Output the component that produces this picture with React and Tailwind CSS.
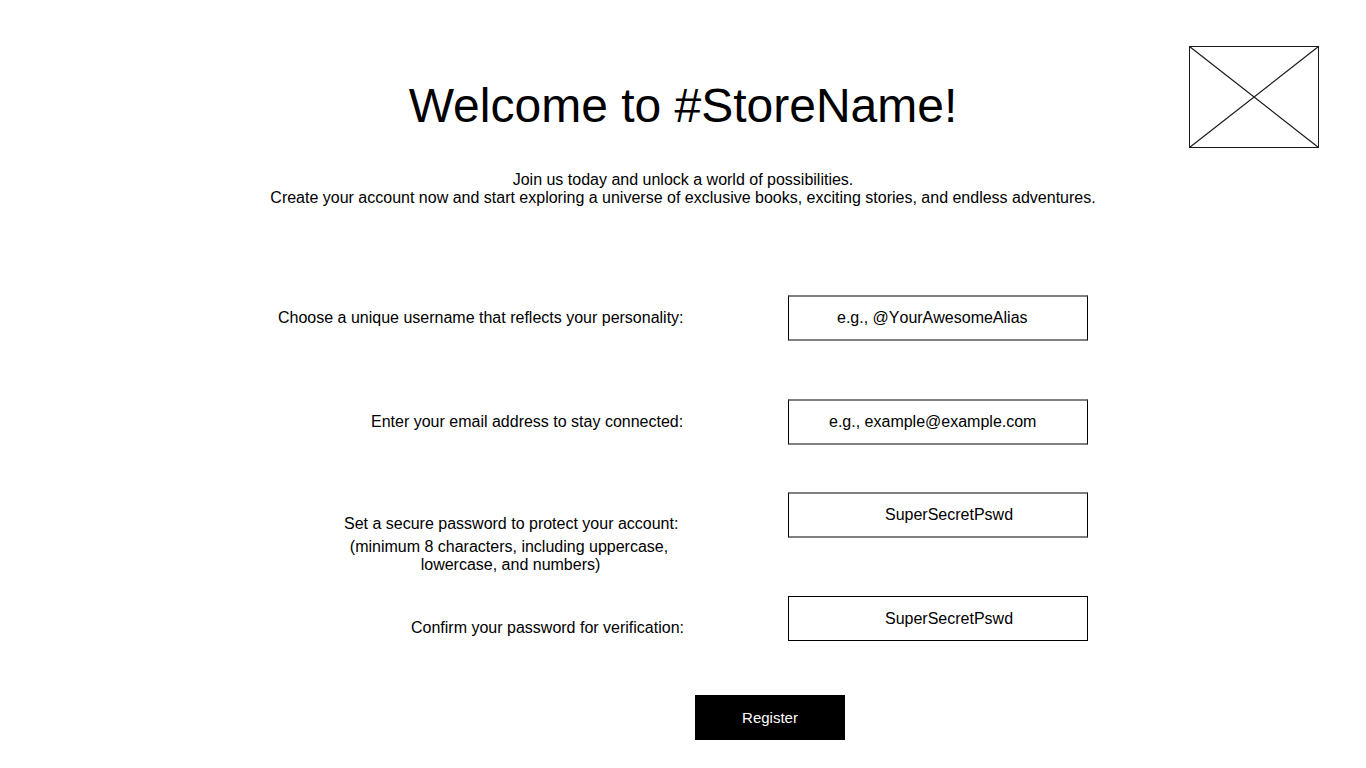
const rows = [
  { label: "Choose a unique username that reflects your personality:", labelBox: "ml-[278px]", value: "e.g., @YourAwesomeAlias", field: "pl-[48px] border-x border-y-2 border-x-black border-y-[#808080] [font-kerning:none]", row: "mt-[87px] h-[46px]", labelPad: "pt-[14px]" },
  { label: "Enter your email address to stay connected:", labelBox: "ml-[371px]", value: "e.g., example@example.com", field: "pl-[40px] border-x border-y-2 border-x-black border-y-[#808080]", row: "mt-[58px] h-[46px]", labelPad: "pt-[14px]" },
  { label: "Set a secure password to protect your account:", labelBox: "ml-[344px]", value: "SuperSecretPswd", field: "pl-[96px] border-x border-y-2 border-x-black border-y-[#808080]", row: "mt-[47px] h-[46px]", labelPad: "pt-[23px]", note: true },
  { label: "Confirm your password for verification:", labelBox: "ml-[411px]", value: "SuperSecretPswd", field: "pl-[96px] border border-black", row: "mt-[58px] h-[45px]", labelPad: "pt-[23px]" },
];

function Placeholder() {
  return (
    <svg className="mt-[46px] mr-[47px] h-[102px] w-[130px]" viewBox="0 0 130 102" fill="none" stroke="#1a1a1a">
      <rect x=".5" y=".5" width="129" height="101" />
      <path strokeWidth="1.2" d="M.5 .5L129.5 101.5M129.5 .5L.5 101.5" />
    </svg>
  );
}

export default function App() {
  return (
    <main className="flex h-[768px] w-[1366px] flex-col overflow-hidden bg-white font-['Liberation_Sans',sans-serif] text-[16px] leading-[18px] text-black">
      <header className="grid h-[171px] shrink-0 grid-cols-[177px_1fr_177px]">
        <h1 className="col-start-2 pt-[78px] text-center text-[48px] leading-[55px] whitespace-nowrap">Welcome to #StoreName!</h1>
        <Placeholder />
      </header>
      <p className="h-[37px] shrink-0 text-center">
        Join us today and unlock a world of possibilities.<br />
        Create your account now and start exploring a universe of exclusive books, exciting stories, and endless adventures.
      </p>
      <form className="flex flex-col">
        {rows.map((row) => (
          <div key={row.label} className={`flex shrink-0 ${row.row}`}>
            <div className="w-[788px] shrink-0">
              <div className={`${row.labelBox} ${row.labelPad} whitespace-nowrap`}>{row.label}</div>
              {row.note && (
                <p className="ml-[340px] w-[341px] pt-[5px] text-center">
                  <span className="block pr-[3px]">(minimum 8 characters, including uppercase,</span>
                  <span className="block">lowercase, and numbers)</span>
                </p>
              )}
            </div>
            <div className={`flex w-[300px] items-center ${row.field}`}>{row.value}</div>
          </div>
        ))}
        <button type="button" className="mt-[54px] ml-[695px] h-[45px] w-[150px] bg-black text-[15px] text-white">Register</button>
      </form>
    </main>
  );
}
